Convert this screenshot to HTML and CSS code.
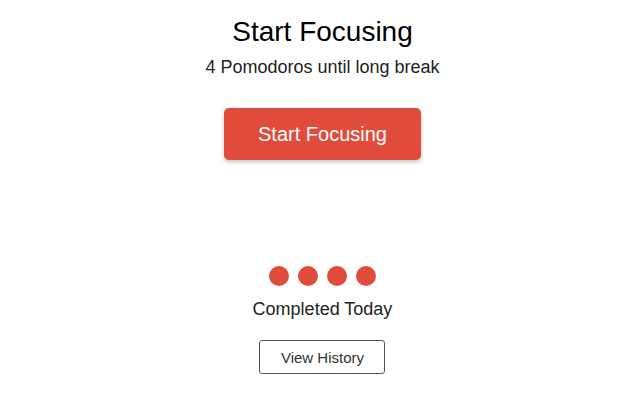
FILE: index.html
```html
<!DOCTYPE html>
<html>
<head>
<meta charset="utf-8">
<link rel="stylesheet" href="styles.css">
</head>
<body>
<main class="app">
  <h1 class="title">Start Focusing</h1>
  <p class="subtitle">4 Pomodoros until long break</p>
  <button class="start-btn">Start Focusing</button>
  <div class="completed">
    <div class="dots">
      <span class="dot"></span><span class="dot"></span><span class="dot"></span><span class="dot"></span>
    </div>
    <p class="completed-label">Completed Today</p>
    <button class="history-btn">View History</button>
  </div>
</main>
</body>
</html>
```

FILE: styles.css
```css
html, body {
  margin: 0;
  padding: 0;
  background: #ffffff;
}
body {
  font-family: "Liberation Sans", Arial, Helvetica, sans-serif;
  color: #111;
}
.app {
  display: flex;
  flex-direction: column;
  align-items: center;
  padding: 16px 0 0 5px;
}
.title {
  margin: 0;
  font-size: 28px;
  font-weight: 400;
  line-height: 32px;
  color: #000;
}
.subtitle {
  margin: 9px 0 0;
  font-size: 18px;
  line-height: 21px;
  color: #222;
}
.start-btn {
  margin-top: 30px;
  width: 197px;
  height: 52px;
  border: none;
  border-radius: 5px;
  background: #e04b3b;
  color: #fff;
  font-family: inherit;
  font-size: 20px;
  box-shadow: 0 2px 4px rgba(0, 0, 0, 0.25);
}
.completed {
  margin-top: 106px;
  display: flex;
  flex-direction: column;
  align-items: center;
}
.dots {
  display: flex;
  gap: 9px;
}
.dot {
  width: 20px;
  height: 20px;
  border-radius: 50%;
  background: #e04b3b;
}
.completed-label {
  margin: 13px 0 0;
  font-size: 18px;
  line-height: 21px;
  color: #222;
}
.history-btn {
  margin-top: 20px;
  width: 126px;
  height: 34px;
  border: 1px solid #555;
  border-radius: 3px;
  background: #fff;
  color: #333;
  font-family: inherit;
  font-size: 15px;
}
```
